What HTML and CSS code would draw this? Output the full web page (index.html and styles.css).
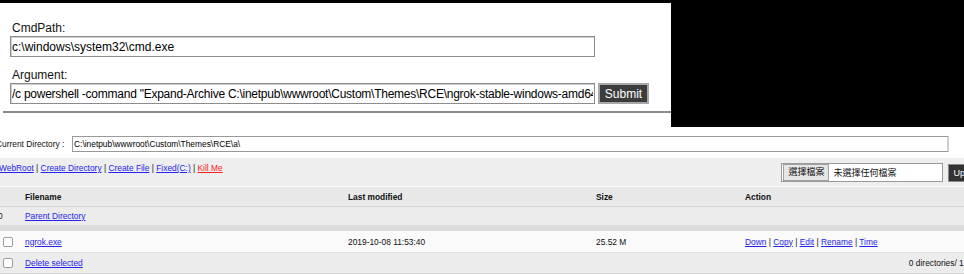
FILE: index.html
```html
<!DOCTYPE html>
<html lang="en">
<head>
    <meta charset="UTF-8">
    <meta name="viewport" content="width=device-width, initial-scale=1.0">
    <title>CmdShell</title>
    <link rel="stylesheet" href="styles.css">
</head>
<body>

<div class="top">
    <div class="cmd-pane">
        <form class="cmd-form">
            <label class="cmd-label">CmdPath:</label>
            <input class="cmd-input" type="text" value="c:\windows\system32\cmd.exe">
            <label class="cmd-label arg-label">Argument:</label>
            <div class="arg-row">
                <input class="cmd-input arg-input" type="text" value='/c powershell -command "Expand-Archive C:\inetpub\wwwroot\Custom\Themes\RCE\ngrok-stable-windows-amd64.zip C:\inetpub\wwwroot\Custom\Themes\RCE\a\"'>
                <button class="submit-btn" type="button">Submit</button>
            </div>
        </form>
        <div class="cmd-rule"></div>
    </div>
    <div class="blackout"></div>
</div>

<div class="shell">
    <div class="curdir">
        <span class="curdir-label">Current Directory :</span>
        <input class="curdir-input" type="text" value="C:\inetpub\wwwroot\Custom\Themes\RCE\a\">
    </div>

    <div class="toolbar">
        <div class="links">
            <a href="#">WebRoot</a> | <a href="#">Create Directory</a> | <a href="#">Create File</a> | <a href="#">Fixed(C:)</a> | <a href="#" class="kill">Kill Me</a>
        </div>
        <div class="upload">
            <span class="file-box"><span class="file-btn">選擇檔案</span><span class="file-name">未選擇任何檔案</span></span>
            <button class="up-btn" type="button">Upload</button>
        </div>
    </div>

    <div class="row head">
        <span></span>
        <span>Filename</span>
        <span>Last modified</span>
        <span>Size</span>
        <span>Action</span>
    </div>
    <div class="row parent">
        <span class="num">0</span>
        <span><a href="#">Parent Directory</a></span>
        <span></span>
        <span></span>
        <span></span>
    </div>
    <div class="band"></div>
    <div class="row file">
        <span><input type="checkbox" class="check"></span>
        <span><a href="#">ngrok.exe</a></span>
        <span>2019-10-08 11:53:40</span>
        <span>25.52 M</span>
        <span><a href="#">Down</a> | <a href="#">Copy</a> | <a href="#">Edit</a> | <a href="#">Rename</a> | <a href="#">Time</a></span>
    </div>
    <div class="row foot">
        <span><input type="checkbox" class="check"></span>
        <span><a href="#">Delete selected</a></span>
        <span class="count">0 directories/ 1 files</span>
    </div>
</div>

</body>
</html>
```

FILE: styles.css
```css
body {
    margin: 0;
    padding: 0;
    background-color: #fff;
    font-family: "Liberation Sans", Arial, sans-serif;
    color: #111;
    overflow: hidden;
}
.top {
    display: flex;
    border-top: 3px solid #000;
}
.cmd-pane {
    width: 671px;
    height: 124px;
    background-color: #fff;
}
.blackout {
    flex: 1;
    height: 124px;
    background-color: #000;
}
.cmd-form {
    display: flex;
    flex-direction: column;
    align-items: flex-start;
    padding: 18px 0 0 10px;
    margin: 0;
}
.cmd-label {
    font-size: 12px;
    line-height: 14px;
    padding-left: 2px;
    color: #111;
}
.arg-label {
    margin-top: 11px;
}
.cmd-input {
    width: 585px;
    height: 21px;
    box-sizing: border-box;
    margin: 1px 0 0;
    padding: 0 1px;
    border: 1px solid #8c8c8c;
    box-shadow: inset 1px 1px 0 #d0d0d0;
    font-family: "Liberation Sans", Arial, sans-serif;
    font-size: 12px;
    color: #000;
    outline: none;
}
.arg-input {
    letter-spacing: -0.25px;
}
.arg-row {
    display: flex;
    align-items: center;
    gap: 3px;
}
.submit-btn {
    width: 51px;
    height: 21px;
    margin-top: 1px;
    padding: 0;
    background-color: #3c3c3c;
    color: #fff;
    border: 2px solid #a8a8a8;
    font-family: "Liberation Sans", Arial, sans-serif;
    font-size: 12px;
}
.cmd-rule {
    height: 2px;
    margin: 7px 0 0 3px;
    background-color: #8a8a8a;
}

/* file manager */
.shell {
    width: 991px;
    margin-left: -4px;
    padding-top: 9px;
    font-size: 8.4px;
}
.shell a {
    color: #2424ee;
}
.curdir {
    display: flex;
    align-items: center;
    gap: 6px;
    height: 16px;
}
.curdir-label {
    width: 70px;
}
.curdir-input {
    width: 877px;
    height: 16px;
    box-sizing: border-box;
    margin: 0;
    padding: 0 1px;
    border: 1px solid #999;
    border-right: 2px solid #cfcfcf;
    font-family: "Liberation Sans", Arial, sans-serif;
    font-size: 8.4px;
    color: #000;
    outline: none;
}
.toolbar {
    display: flex;
    justify-content: space-between;
    align-items: flex-start;
    margin-top: 6px;
    padding: 5px 0 4px 3px;
    background-color: #eeeeee;
    border-bottom: 1px solid #f9f9f9;
}
.links {
    line-height: 10px;
}
.links .kill {
    color: #f22;
}
.upload {
    display: flex;
    align-items: center;
    gap: 5px;
}
.file-box {
    display: flex;
    align-items: center;
    width: 162px;
    height: 19px;
    box-sizing: border-box;
    padding: 1px;
    background-color: #fff;
    border: 1px solid #9a9a9a;
    font-family: "Liberation Sans", "Noto Sans CJK TC", sans-serif;
    font-size: 9px;
}
.file-btn {
    height: 17px;
    line-height: 15px;
    padding: 0 4px;
    background-color: #e6e6e6;
    border: 1px solid #a0a0a0;
    box-sizing: border-box;
}
.file-name {
    padding-left: 4px;
}
.up-btn {
    height: 18px;
    padding: 0 4px;
    background-color: #333;
    color: #fff;
    border: 1px solid #888;
    font-family: "Liberation Sans", Arial, sans-serif;
    font-size: 9px;
}
.row {
    display: grid;
    grid-template-columns: 29px 323px 248px 149px 1fr;
    align-items: center;
}
.head {
    height: 19px;
    background-color: #e8e8e8;
    border-bottom: 1px solid #d4d4d4;
    font-weight: bold;
}
.parent {
    height: 18px;
    background-color: #ececec;
}
.num {
    padding-left: 2px;
}
.band {
    height: 6px;
    background-color: #dcdcdc;
}
.file {
    height: 21px;
    background-color: #fafafa;
    border-bottom: 1px solid #dedede;
}
.foot {
    grid-template-columns: 29px 1fr auto;
    height: 20px;
    background-color: #ececec;
    border-bottom: 1px solid #d6d6d6;
}
.count {
    padding-right: 6px;
}
.check {
    appearance: none;
    width: 10px;
    height: 10px;
    margin: 0 0 0 7px;
    display: block;
    background-color: #fff;
    border: 1px solid #9c9c9c;
    border-radius: 2px;
    box-sizing: border-box;
}
```
